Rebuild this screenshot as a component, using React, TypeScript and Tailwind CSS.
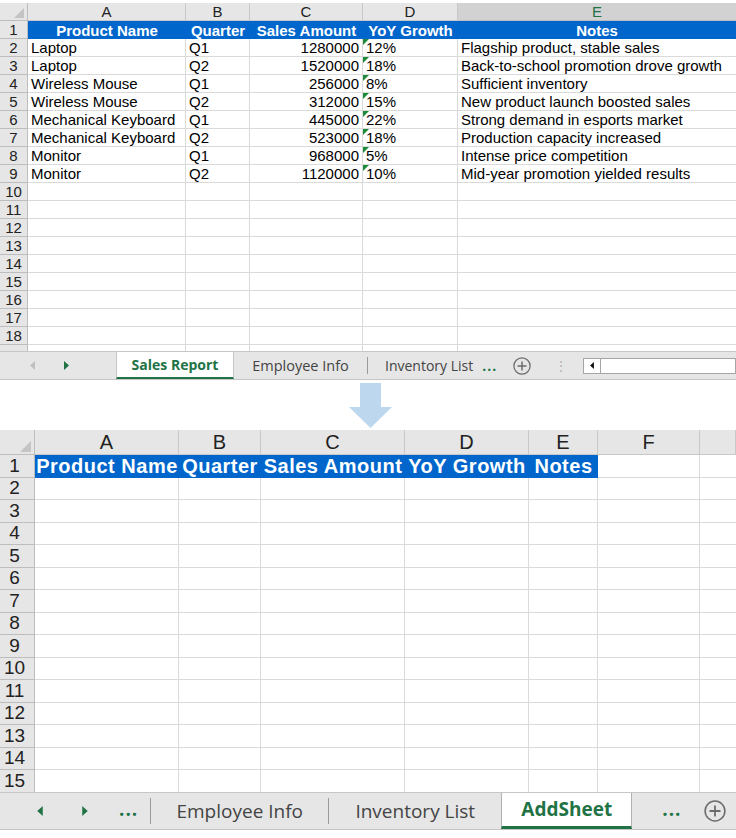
import React from 'react';

// Sales sheet rows: product, quarter, amount, growth, notes
const salesRows: string[][] = [
  ['Laptop', 'Q1', '1280000', '12%', 'Flagship product, stable sales'],
  ['Laptop', 'Q2', '1520000', '18%', 'Back-to-school promotion drove growth'],
  ['Wireless Mouse', 'Q1', '256000', '8%', 'Sufficient inventory'],
  ['Wireless Mouse', 'Q2', '312000', '15%', 'New product launch boosted sales'],
  ['Mechanical Keyboard', 'Q1', '445000', '22%', 'Strong demand in esports market'],
  ['Mechanical Keyboard', 'Q2', '523000', '18%', 'Production capacity increased'],
  ['Monitor', 'Q1', '968000', '5%', 'Intense price competition'],
  ['Monitor', 'Q2', '1120000', '10%', 'Mid-year promotion yielded results'],
];

const headers = ['Product Name', 'Quarter', 'Sales Amount', 'YoY Growth', 'Notes'];

const GREEN = 'text-[#217346]';

// small grey triangle in the select-all corner
const CornerMark = ({ size }: { size: number }) => (
  <svg width={size} height={size} viewBox="0 0 10 10" className="absolute right-[3px] bottom-[2px]">
    <polygon points="10,0 10,10 0,10" fill="#c4c4c4" />
  </svg>
);

// green error flag on number-stored-as-text cells
const ErrorFlag = () => (
  <svg width="6" height="6" viewBox="0 0 6 6" className="absolute left-0 top-0">
    <polygon points="0,0 6,0 0,6" fill="#1f8a3a" />
  </svg>
);

const Caret = ({ dir, color, w = 5, h = 9 }: { dir: 'l' | 'r'; color: string; w?: number; h?: number }) => (
  <svg width={w} height={h} viewBox="0 0 5 9">
    {dir === 'l' ? <polygon points="5,0 5,9 0,4.5" fill={color} /> : <polygon points="0,0 0,9 5,4.5" fill={color} />}
  </svg>
);

const PlusCircle = ({ size }: { size: number }) => (
  <svg width={size} height={size} viewBox="0 0 20 20">
    <circle cx="10" cy="10" r="9" fill="none" stroke="#6b6b6b" strokeWidth="1.4" />
    <path d="M10 5v10M5 10h10" stroke="#6b6b6b" strokeWidth="1.6" />
  </svg>
);

const TopSheet = () => {
  const rowNums = Array.from({ length: 19 }, (_, i) => i + 1);
  return (
    <div className="h-[351px] overflow-hidden pt-[3px]">
      <div className="grid grid-cols-[28px_158px_64px_113px_95px_278px] auto-rows-[18px] text-[15px] leading-[17px] text-black">
        <div className="relative bg-[#e6e6e6] border-r border-b border-[#bdbdbd]">
          <CornerMark size={10} />
        </div>
        {['A', 'B', 'C', 'D'].map((l) => (
          <div key={l} className="flex items-center justify-center bg-[#e6e6e6] border-r border-b border-[#c8c8c8] text-[#222]">
            {l}
          </div>
        ))}
        <div className={`flex items-center justify-center bg-[#d2d2d2] border-b border-[#bdbdbd] ${GREEN}`}>E</div>

        {rowNums.map((n) => (
          <React.Fragment key={n}>
            {/* row 19 only peeks out under the sheet, so no number is shown */}
            <div className="flex items-center justify-center bg-[#e6e6e6] border-r border-b border-[#bdbdbd] text-[#222]">
              {n < 19 ? n : ''}
            </div>
            {n === 1 &&
              headers.map((h) => (
                <div key={h} className="flex items-center justify-center bg-[#0066cc] font-bold text-white whitespace-nowrap">
                  {h}
                </div>
              ))}
            {n >= 2 && n <= 9 && (
              <>
                <div className="flex items-center pl-[3px] whitespace-nowrap border-r border-b border-[#dadada]">{salesRows[n - 2][0]}</div>
                <div className="flex items-center pl-[3px] whitespace-nowrap border-r border-b border-[#dadada]">{salesRows[n - 2][1]}</div>
                <div className="flex items-center justify-end pr-[3px] whitespace-nowrap border-r border-b border-[#dadada]">{salesRows[n - 2][2]}</div>
                <div className="relative flex items-center pl-[3px] whitespace-nowrap border-r border-b border-[#dadada]">
                  <ErrorFlag />
                  {salesRows[n - 2][3]}
                </div>
                <div className="flex items-center pl-[3px] whitespace-nowrap border-b border-[#dadada]">{salesRows[n - 2][4]}</div>
              </>
            )}
            {n > 9 && (
              <>
                <div className="border-r border-b border-[#dadada]" />
                <div className="border-r border-b border-[#dadada]" />
                <div className="border-r border-b border-[#dadada]" />
                <div className="border-r border-b border-[#dadada]" />
                <div className="border-b border-[#dadada]" />
              </>
            )}
          </React.Fragment>
        ))}
      </div>
    </div>
  );
};

const TopTabs = () => (
  <div className="flex h-[29px] items-stretch bg-[#e6e6e6] border-t border-b border-[#c6c6c6] text-[14px] font-['Open_Sans',sans-serif]">
    <div className="flex w-[116px] items-center">
      <div className="ml-[30px]">
        <Caret dir="l" color="#c0c0c0" />
      </div>
      <div className="ml-[29px]">
        <Caret dir="r" color="#217346" />
      </div>
    </div>
    <div className="flex w-[118px] items-center justify-center bg-white border-x border-[#c6c6c6] border-b-2 border-b-[#217346]">
      <span className={`font-bold ${GREEN}`}>Sales Report</span>
    </div>
    <div className="flex w-[133px] items-center justify-center text-[14.5px] text-[#444]">Employee Info</div>
    <div className="my-[5px] w-px bg-[#9a9a9a]" />
    <div className="flex items-center pl-[17px] text-[#444]">Inventory List</div>
    <div className={`flex items-center pl-[9px] font-bold ${GREEN} tracking-[1px]`}>...</div>
    <div className="flex items-center pl-[16px]">
      <PlusCircle size={18} />
    </div>
    <div className="flex items-center pl-[24px] text-[#b0b0b0] text-[12px]">⋮</div>
    <div className="flex items-center pl-[16px] flex-1">
      <div className="flex h-[16px] w-full items-stretch bg-white border border-[#a6a6a6]">
        <div className="flex w-[17px] items-center justify-center border-r border-[#a6a6a6]">
          <Caret dir="l" color="#111" w={4} h={7} />
        </div>
      </div>
    </div>
  </div>
);

const DownArrow = () => (
  <div className="flex h-[50px] justify-center pl-[6px] pt-[3px]">
    <svg width="44" height="46" viewBox="0 0 44 46">
      <polygon points="11,0 32,0 32,24 43,24 21.5,45 0,24 11,24" fill="#bdd7ee" />
    </svg>
  </div>
);

const BottomSheet = () => {
  const rowNums = Array.from({ length: 15 }, (_, i) => i + 1);
  return (
    <div className="h-[362px] overflow-hidden">
      <div className="grid grid-cols-[35px_144px_82px_144px_124px_69px_102px_36px] grid-rows-[25px] auto-rows-[22.5px] text-[19px] leading-[20px] text-black">
        <div className="relative bg-[#e6e6e6] border-r border-b border-[#bdbdbd]">
          <CornerMark size={11} />
        </div>
        {['A', 'B', 'C', 'D', 'E', 'F', ''].map((l, i) => (
          <div key={i} className="flex items-center justify-center bg-[#e6e6e6] border-r border-b border-[#c8c8c8] text-[20px] text-[#222]">
            {l}
          </div>
        ))}

        {rowNums.map((n) => (
          <React.Fragment key={n}>
            <div className="flex items-center justify-center pr-[5px] bg-[#e6e6e6] border-r border-b border-[#bdbdbd] text-[#222]">
              {n}
            </div>
            {n === 1 ? (
              <>
                {headers.map((h) => (
                  <div key={h} className="flex items-center justify-center bg-[#0066cc] text-[20px] tracking-[0.5px] font-bold text-white whitespace-nowrap">
                    {h}
                  </div>
                ))}
                <div className="border-r border-b border-[#dadada]" />
                <div className="border-b border-[#dadada]" />
              </>
            ) : (
              <>
                <div className="border-r border-b border-[#dadada]" />
                <div className="border-r border-b border-[#dadada]" />
                <div className="border-r border-b border-[#dadada]" />
                <div className="border-r border-b border-[#dadada]" />
                <div className="border-r border-b border-[#dadada]" />
                <div className="border-r border-b border-[#dadada]" />
                <div className="border-b border-[#dadada]" />
              </>
            )}
          </React.Fragment>
        ))}
      </div>
    </div>
  );
};

const BottomTabs = () => (
  <div className="flex h-[38px] items-stretch bg-[#e6e6e6] border-t border-b border-[#c6c6c6] text-[19px] font-['Open_Sans',sans-serif]">
    <div className="flex items-center pl-[37px]">
      <Caret dir="l" color="#217346" w={6} h={10} />
    </div>
    <div className="flex items-center pl-[39px]">
      <Caret dir="r" color="#217346" w={6} h={10} />
    </div>
    <div className={`flex items-center pl-[31px] pb-[4px] font-bold ${GREEN} tracking-[1px]`}>...</div>
    <div className="ml-[12px] my-[5px] w-px bg-[#9a9a9a]" />
    <div className="flex w-[177px] items-center justify-center text-[#444]">Employee Info</div>
    <div className="my-[5px] w-px bg-[#9a9a9a]" />
    <div className="flex w-[172px] items-center justify-center text-[#444]">Inventory List</div>
    <div className="flex w-[131px] items-center justify-center bg-white border-x border-[#b0b0b0] border-b-[3px] border-b-[#217346]">
      <span className={`font-bold ${GREEN}`}>AddSheet</span>
    </div>
    <div className={`flex items-center pl-[30px] pb-[4px] font-bold ${GREEN} tracking-[1px]`}>...</div>
    <div className="flex items-center pl-[22px]">
      <PlusCircle size={22} />
    </div>
  </div>
);

const App: React.FC = () => {
  return (
    <div className="w-[736px] h-[838px] overflow-hidden bg-white font-['Liberation_Sans',Arial,sans-serif]">
      <TopSheet />
      <TopTabs />
      <DownArrow />
      <BottomSheet />
      <BottomTabs />
    </div>
  );
};

export default App;
